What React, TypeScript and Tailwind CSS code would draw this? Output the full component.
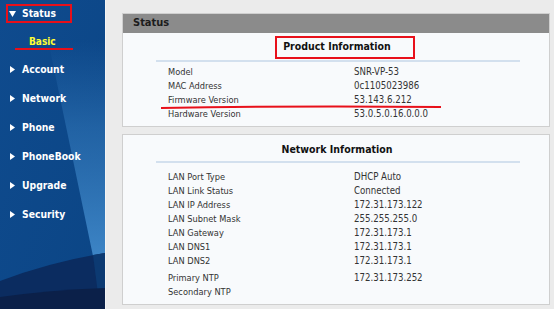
import React from "react";

const font = "font-['DejaVu_Sans_Condensed','DejaVu_Sans',sans-serif]";

function Tri({ down }: { down?: boolean }) {
  return down ? (
    <svg width="7" height="6" viewBox="0 0 7 6" className="mr-[6px]">
      <polygon points="0,0 7,0 3.5,6" fill="#fff" />
    </svg>
  ) : (
    <svg width="5" height="7" viewBox="0 0 5 7" className="mr-[7px]">
      <polygon points="0,0 5,3.5 0,7" fill="#fff" />
    </svg>
  );
}

function SideBg() {
  return (
    <svg className="absolute inset-0" width="105" height="309" viewBox="0 0 105 309">
      <defs>
        <linearGradient id="base" x1="0" y1="0" x2="1" y2="1">
          <stop offset="0" stopColor="#0f4b8e" />
          <stop offset="1" stopColor="#0b4585" />
        </linearGradient>
        <linearGradient id="streak" x1="0" y1="0" x2="0" y2="1">
          <stop offset="0" stopColor="#2a6db0" stopOpacity="0" />
          <stop offset="0.4" stopColor="#2f74b6" stopOpacity="0.6" />
          <stop offset="1" stopColor="#3d85c6" stopOpacity="1" />
        </linearGradient>
      </defs>
      <rect width="105" height="309" fill="url(#base)" />
      <polygon points="48,40 105,40 105,258 93,256" fill="url(#streak)" />
      <path d="M0,281 Q50,262 105,253 L105,309 L0,309 Z" fill="#0b2c60" />
      <path d="M93,255 L105,253 L105,309 L100,309 Z" fill="#0c3a72" />
      <path d="M0,297 Q50,290 105,288 L105,309 L0,309 Z" fill="#0b2049" />
    </svg>
  );
}

const productRows: [string, string][] = [
  ["Model", "SNR-VP-53"],
  ["MAC Address", "0c1105023986"],
  ["Firmware Version", "53.143.6.212"],
  ["Hardware Version", "53.0.5.0.16.0.0.0"],
];

const networkRows: [string, string][] = [
  ["LAN Port Type", "DHCP Auto"],
  ["LAN Link Status", "Connected"],
  ["LAN IP Address", "172.31.173.122"],
  ["LAN Subnet Mask", "255.255.255.0"],
  ["LAN Gateway", "172.31.173.1"],
  ["LAN DNS1", "172.31.173.1"],
  ["LAN DNS2", "172.31.173.1"],
];

function Row({ l, v }: { l: string; v: string }) {
  return (
    <div className="flex h-[14px] items-center text-[#333]">
      <span className="w-[198px] pl-[12px] text-[9.2px]">{l}</span>
      <span className="text-[9.6px]">{v}</span>
    </div>
  );
}

export default function App() {
  return (
    <div className={`${font} flex h-[309px] w-[554px] overflow-hidden`}>
      <div className="relative h-full w-[105px] shrink-0 overflow-hidden">
        <SideBg />
        <div className="relative flex flex-col pt-[4px] text-[10.3px] font-bold text-white">
          <div className="flex h-[19px] items-center pl-[9px]">
            <Tri down />
            <span>Status</span>
          </div>
          <div className="mt-[9px] flex h-[18px] items-center pl-[29px] text-[10px] text-[#ffff33]">Basic</div>
          <div className="mt-[5px]">
            {["Account", "Network", "Phone", "PhoneBook", "Upgrade", "Security"].map((t) => (
              <div key={t} className="flex h-[29px] items-center pl-[10px]">
                <Tri />
                <span>{t}</span>
              </div>
            ))}
          </div>
        </div>
        <div className="absolute left-[6px] top-[4px] h-[19px] w-[66px] border-2 border-[#e8101a]" />
        <div className="absolute left-[15px] top-[48px] h-[2px] w-[58px] bg-[#e8101a]" />
      </div>
      <div className="h-full flex-1 border-l border-[#f4f4f4] bg-[#ebebeb] pl-[16px] pt-[13px]">
        <div className="relative w-[428px] border border-[#cfcfcf] bg-[#f8fafc]">
          <div className="flex h-[19px] items-center bg-[#8b8b8b] pl-[10px] text-[11px] font-bold text-[#1c1c1c]">
            Status
          </div>
          <div className="pb-[5px] pt-[6px]">
            <div className="flex h-[16px] items-center justify-center pl-[2px] text-[10.5px] font-bold text-[#111]">
              Product Information
            </div>
            <div className="ml-[33px] mt-[5px] h-[2px] w-[364px] bg-[#d3e0ee]" />
            <div className="ml-[33px] mt-[3px]">
              {productRows.map(([l, v]) => (
                <Row key={l} l={l} v={v} />
              ))}
            </div>
          </div>
          <div className="absolute left-[152px] top-[22px] h-[23px] w-[140px] border-2 border-[#e8101a]" />
          <svg className="absolute left-[37px] top-[90px]" width="282" height="6" viewBox="0 0 282 6">
            <path d="M1,4 Q140,1.5 281,3" stroke="#e8101a" strokeWidth="2" fill="none" />
          </svg>
        </div>
        <div className="mt-[7px] w-[428px] border border-[#cfcfcf] bg-[#f8fafc] pb-[5px] pt-[7px]">
          <div className="flex h-[16px] items-center justify-center pl-[2px] text-[10.5px] font-bold text-[#111]">
            Network Information
          </div>
          <div className="ml-[33px] mt-[3px] h-[2px] w-[364px] bg-[#d3e0ee]" />
          <div className="ml-[33px] mt-[7px]">
            {networkRows.map(([l, v]) => (
              <Row key={l} l={l} v={v} />
            ))}
            <div className="mt-[3px]">
              <Row l="Primary NTP" v="172.31.173.252" />
              <Row l="Secondary NTP" v="" />
            </div>
          </div>
        </div>
      </div>
    </div>
  );
}
